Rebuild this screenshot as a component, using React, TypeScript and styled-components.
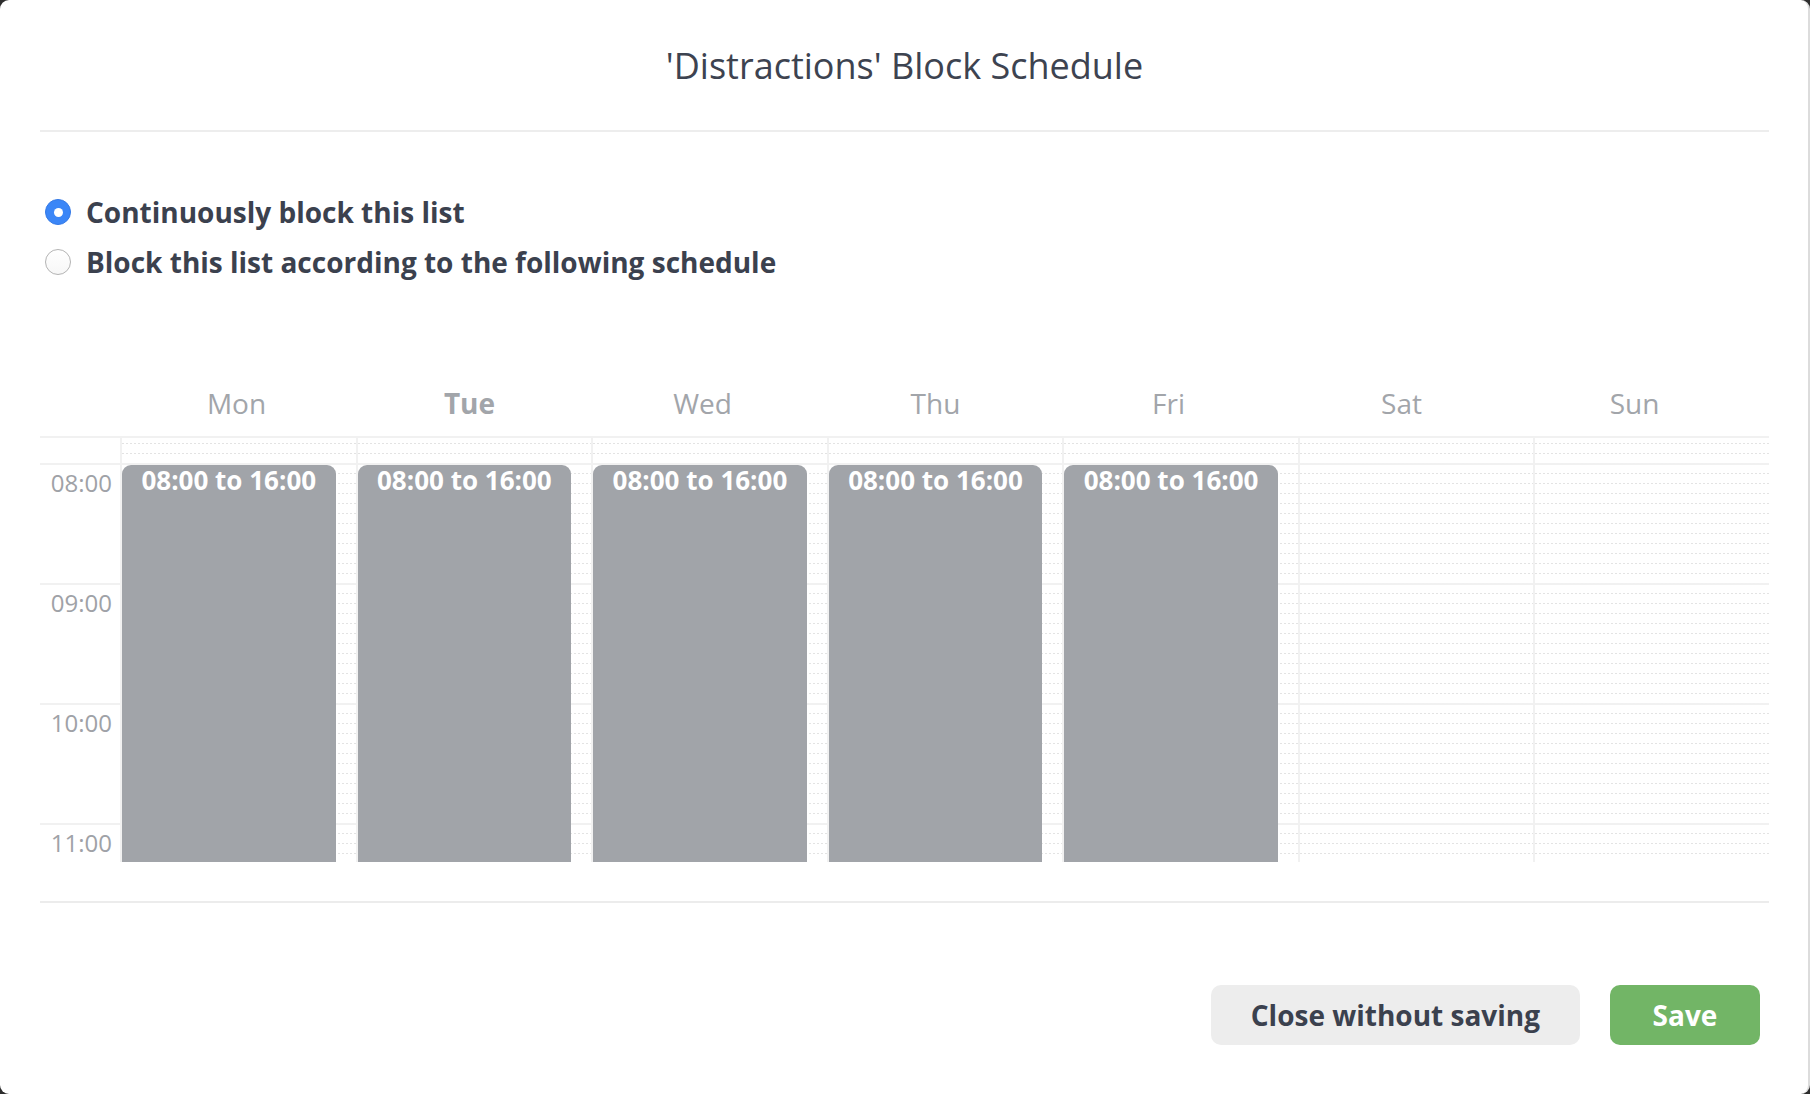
import React, { useLayoutEffect, useRef } from 'react';
import styled, { createGlobalStyle } from 'styled-components';

const HOUR = 120;
const SCROLL_TOP = 935;

const GlobalStyle = createGlobalStyle`
  html, body { margin: 0; padding: 0; background: #2d2d2d; }
  body { font-family: "Open Sans", "Noto Sans", sans-serif; }
  *, *::before, *::after { box-sizing: border-box; }
`;

const Modal = styled.div`
  width: 1810px;
  height: 1094px;
  background: #ffffff;
  border-radius: 9px;
  border-right: 2px solid #dcdcdc;
  display: flex;
  flex-direction: column;
  padding: 0 39px 0 40px;
  overflow: hidden;
`;

const Header = styled.header`
  height: 132px;
  display: flex;
  align-items: center;
  justify-content: center;
  border-bottom: 2px solid #ededed;
  flex-shrink: 0;
`;

const Title = styled.h1`
  margin: 0;
  font-size: 36px;
  font-weight: 400;
  color: #3d4350;
`;

const RadioGroup = styled.div`
  margin-top: 55px;
  display: flex;
  flex-direction: column;
`;

const RadioRow = styled.label`
  display: flex;
  align-items: center;
  height: 50px;
  gap: 15px;
  font-size: 28px;
  line-height: 38px;
  font-weight: 700;
  color: #3b414e;
  cursor: pointer;
`;

const RadioDot = styled.span<{ $checked: boolean }>`
  width: 26px;
  height: 26px;
  margin-left: 5px;
  border-radius: 50%;
  flex-shrink: 0;
  display: flex;
  align-items: center;
  justify-content: center;
  background: ${(p) => (p.$checked ? '#3b86f7' : 'linear-gradient(#ffffff, #f7f7f7)')};
  border: ${(p) => (p.$checked ? '1px solid #3479e6' : '1.5px solid #b3b3b3')};
  &::after {
    content: '';
    width: 9px;
    height: 9px;
    border-radius: 50%;
    background: #ffffff;
    display: ${(p) => (p.$checked ? 'block' : 'none')};
  }
`;

const WeekHeader = styled.div`
  display: grid;
  grid-template-columns: 80px repeat(7, 1fr);
  margin-top: 96px;
  margin-bottom: 13px;
  padding-right: 18px;
`;

const DayLabel = styled.div<{ $today?: boolean }>`
  text-align: center;
  line-height: 40px;
  font-size: 28px;
  font-weight: ${(p) => (p.$today ? 700 : 400)};
  color: #a2a5aa;
`;

const Scroller = styled.div`
  height: 426px;
  border-top: 2px solid #f1f1f1;
  overflow-y: scroll;
  scrollbar-width: none;
  flex-shrink: 0;
  &::-webkit-scrollbar { display: none; }
`;

const ScrollContent = styled.div`
  display: grid;
  grid-template-columns: 80px repeat(7, 1fr);
`;

const TimeColumn = styled.div`
  display: flex;
  flex-direction: column;
`;

const TimeCell = styled.div`
  height: ${HOUR}px;
  border-top: 2px solid #f1f1f1;
  text-align: right;
  padding-right: 8px;
  font-size: 24px;
  line-height: 36px;
  color: #9fa2a7;
`;

const DayColumn = styled.div`
  position: relative;
  height: ${HOUR * 24}px;
  border-left: 2px solid #f1f1f1;
  &::before {
    content: '';
    position: absolute;
    inset: 0;
    background: repeating-linear-gradient(to bottom, #e3e3e3 0 1px, transparent 1px 10px);
    -webkit-mask-image: repeating-linear-gradient(to right, #000 0 2px, transparent 2px 4px);
    mask-image: repeating-linear-gradient(to right, #000 0 2px, transparent 2px 4px);
  }
  &::after {
    content: '';
    position: absolute;
    inset: 0;
    background: repeating-linear-gradient(to bottom, #f1f1f1 0 2px, transparent 2px ${HOUR}px);
  }
`;

const EventBlock = styled.div`
  position: absolute;
  left: 0;
  right: 20px;
  z-index: 1;
  background: #a1a4a9;
  border-radius: 9px;
  color: #ffffff;
  font-size: 26px;
  font-weight: 700;
  line-height: 1.2;
  text-align: center;
`;

const Footer = styled.footer`
  margin-top: 39px;
  border-top: 2px solid #ececec;
  display: flex;
  justify-content: flex-end;
  gap: 30px;
  padding: 82px 9px 0 0;
`;

const Button = styled.button<{ $primary?: boolean }>`
  height: 60px;
  min-width: 150px;
  padding: 0 40px;
  border: none;
  border-radius: 10px;
  font-family: "Open Sans", "Noto Sans", sans-serif;
  font-size: 28px;
  font-weight: 700;
  cursor: pointer;
  background: ${(p) => (p.$primary ? '#72b566' : '#ededed')};
  color: ${(p) => (p.$primary ? '#ffffff' : '#3b414e')};
`;

type Block = { start: number; end: number };

const days: { name: string; today?: boolean; blocks: Block[] }[] = [
  { name: 'Mon', blocks: [{ start: 8, end: 16 }] },
  { name: 'Tue', today: true, blocks: [{ start: 8, end: 16 }] },
  { name: 'Wed', blocks: [{ start: 8, end: 16 }] },
  { name: 'Thu', blocks: [{ start: 8, end: 16 }] },
  { name: 'Fri', blocks: [{ start: 8, end: 16 }] },
  { name: 'Sat', blocks: [] },
  { name: 'Sun', blocks: [] },
];

const pad = (n: number) => String(n).padStart(2, '0') + ':00';

export default function App() {
  const scrollRef = useRef<HTMLDivElement>(null);
  useLayoutEffect(() => {
    if (scrollRef.current) scrollRef.current.scrollTop = SCROLL_TOP;
  }, []);

  return (
    <>
      <GlobalStyle />
      <Modal>
        <Header>
          <Title>'Distractions' Block Schedule</Title>
        </Header>
        <RadioGroup>
          <RadioRow>
            <RadioDot $checked />
            Continuously block this list
          </RadioRow>
          <RadioRow>
            <RadioDot $checked={false} />
            Block this list according to the following schedule
          </RadioRow>
        </RadioGroup>
        <WeekHeader>
          <div />
          {days.map((d) => (
            <DayLabel key={d.name} $today={d.today}>
              {d.name}
            </DayLabel>
          ))}
        </WeekHeader>
        <Scroller ref={scrollRef}>
          <ScrollContent>
            <TimeColumn>
              {Array.from({ length: 24 }, (_, h) => (
                <TimeCell key={h}>{h === 0 ? '' : pad(h)}</TimeCell>
              ))}
            </TimeColumn>
            {days.map((d) => (
              <DayColumn key={d.name}>
                {d.blocks.map((b, i) => (
                  <EventBlock
                    key={i}
                    style={{ top: b.start * HOUR + 2, height: (b.end - b.start) * HOUR - 2 }}
                  >
                    {pad(b.start)} to {pad(b.end)}
                  </EventBlock>
                ))}
              </DayColumn>
            ))}
          </ScrollContent>
        </Scroller>
        <Footer>
          <Button>Close without saving</Button>
          <Button $primary>Save</Button>
        </Footer>
      </Modal>
    </>
  );
}
